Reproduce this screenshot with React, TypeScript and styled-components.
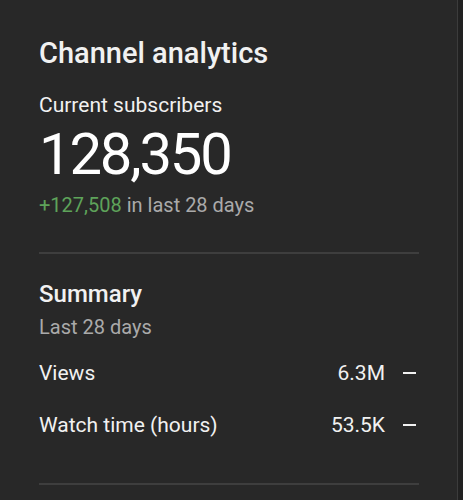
import React from "react";
import styled, { createGlobalStyle } from "styled-components";

const GlobalStyle = createGlobalStyle`
  html, body {
    margin: 0;
    padding: 0;
    background: #282828;
  }
  body {
    font-family: Roboto, "Noto Sans", sans-serif;
    -webkit-font-smoothing: antialiased;
  }
`;

// outer frame, with the thin scroll edge on the right
const Frame = styled.div`
  display: flex;
  width: 463px;
  height: 500px;
  overflow: hidden;
  background: #282828;
`;

const Card = styled.div`
  flex: 1;
  padding: 36px 38px 0 39px;
`;

const Edge = styled.div`
  width: 5px;
  border-left: 1px solid #3c3c3c;
  background: #212121;
`;

const Title = styled.h1`
  margin: 0;
  font-size: 29px;
  font-weight: 500;
  line-height: 34px;
  color: #f1f1f1;
`;

const Label = styled.div`
  margin-top: 23px;
  font-size: 21px;
  line-height: 24px;
  color: #f1f1f1;
`;

const BigNumber = styled.div`
  margin-top: 3px;
  font-size: 58px;
  line-height: 68px;
  font-weight: 400;
  color: #ffffff;
  letter-spacing: -2.2px;
`;

const Change = styled.div`
  margin-top: 5px;
  font-size: 20px;
  line-height: 24px;
  color: #aaaaaa;
`;

const Gain = styled.span`
  color: #5ea35a;
`;

const Divider = styled.hr<{ $top: number }>`
  margin: ${(p) => p.$top}px 0 0;
  border: none;
  border-top: 2px solid #3e3e3e;
`;

const SectionTitle = styled.h2`
  margin: 25px 0 0;
  font-size: 24px;
  font-weight: 500;
  line-height: 30px;
  color: #f1f1f1;
`;

const SubLabel = styled.div`
  margin-top: 6px;
  font-size: 20px;
  line-height: 24px;
  color: #aaaaaa;
`;

const Rows = styled.div`
  margin-top: 22px;
  display: flex;
  flex-direction: column;
  gap: 28px;
`;

const Row = styled.div`
  display: flex;
  align-items: center;
  height: 24px;
  font-size: 21px;
  line-height: 24px;
  color: #f1f1f1;
`;

const RowLabel = styled.span`
  flex: 1;
`;

const RowValue = styled.span`
  text-align: right;
`;

const Dash = styled.span`
  width: 13px;
  height: 2px;
  margin: 0 3px 0 18px;
  background: #f1f1f1;
`;

const metrics = [
  { label: "Views", value: "6.3M" },
  { label: "Watch time (hours)", value: "53.5K" },
];

export default function App() {
  return (
    <>
      <GlobalStyle />
      <Frame>
        <Card>
          <Title>Channel analytics</Title>
          <Label>Current subscribers</Label>
          <BigNumber>128,350</BigNumber>
          <Change>
            <Gain>+127,508</Gain> in last 28 days
          </Change>
          <Divider $top={35} />
          <SectionTitle>Summary</SectionTitle>
          <SubLabel>Last 28 days</SubLabel>
          <Rows>
            {metrics.map((m) => (
              <Row key={m.label}>
                <RowLabel>{m.label}</RowLabel>
                <RowValue>{m.value}</RowValue>
                <Dash />
              </Row>
            ))}
          </Rows>
          <Divider $top={46} />
        </Card>
        <Edge />
      </Frame>
    </>
  );
}
